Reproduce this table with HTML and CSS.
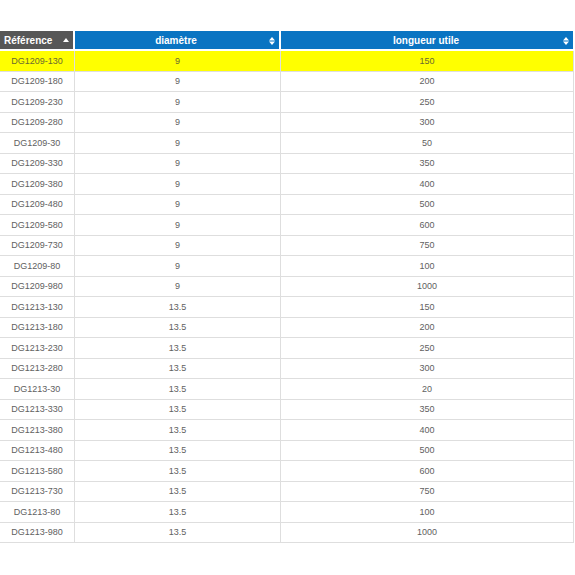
FILE: index.html
```html
<!DOCTYPE html>
<html lang="fr">
<head>
<meta charset="utf-8">
<title>Tableau</title>
<link rel="stylesheet" href="styles.css">
</head>
<body>
<table class="grid">
  <colgroup>
    <col class="c-ref">
    <col class="c-dia">
    <col class="c-len">
  </colgroup>
  <thead>
    <tr>
      <th class="h-ref"><span class="h-label">Référence</span><svg class="sort-up" viewBox="0 0 6 4" width="6" height="4"><path d="M3 0 L6 4 L0 4 Z" fill="#fff"/></svg></th>
      <th class="h-sort"><span class="h-label">diamètre</span><svg class="sort-both" viewBox="0 0 6 8" width="6" height="8"><path d="M3 0 L6 3.4 L0 3.4 Z M3 8 L6 4.6 L0 4.6 Z" fill="#fff"/></svg></th>
      <th class="h-sort"><span class="h-label">longueur utile</span><svg class="sort-both" viewBox="0 0 6 8" width="6" height="8"><path d="M3 0 L6 3.4 L0 3.4 Z M3 8 L6 4.6 L0 4.6 Z" fill="#fff"/></svg></th>
    </tr>
  </thead>
  <tbody>
    <tr class="hl"><td>DG1209-130</td><td>9</td><td>150</td></tr>
    <tr><td>DG1209-180</td><td>9</td><td>200</td></tr>
    <tr><td>DG1209-230</td><td>9</td><td>250</td></tr>
    <tr><td>DG1209-280</td><td>9</td><td>300</td></tr>
    <tr><td>DG1209-30</td><td>9</td><td>50</td></tr>
    <tr><td>DG1209-330</td><td>9</td><td>350</td></tr>
    <tr><td>DG1209-380</td><td>9</td><td>400</td></tr>
    <tr><td>DG1209-480</td><td>9</td><td>500</td></tr>
    <tr><td>DG1209-580</td><td>9</td><td>600</td></tr>
    <tr><td>DG1209-730</td><td>9</td><td>750</td></tr>
    <tr><td>DG1209-80</td><td>9</td><td>100</td></tr>
    <tr><td>DG1209-980</td><td>9</td><td>1000</td></tr>
    <tr><td>DG1213-130</td><td>13.5</td><td>150</td></tr>
    <tr><td>DG1213-180</td><td>13.5</td><td>200</td></tr>
    <tr><td>DG1213-230</td><td>13.5</td><td>250</td></tr>
    <tr><td>DG1213-280</td><td>13.5</td><td>300</td></tr>
    <tr><td>DG1213-30</td><td>13.5</td><td>20</td></tr>
    <tr><td>DG1213-330</td><td>13.5</td><td>350</td></tr>
    <tr><td>DG1213-380</td><td>13.5</td><td>400</td></tr>
    <tr><td>DG1213-480</td><td>13.5</td><td>500</td></tr>
    <tr><td>DG1213-580</td><td>13.5</td><td>600</td></tr>
    <tr><td>DG1213-730</td><td>13.5</td><td>750</td></tr>
    <tr><td>DG1213-80</td><td>13.5</td><td>100</td></tr>
    <tr><td>DG1213-980</td><td>13.5</td><td>1000</td></tr>
  </tbody>
</table>
</body>
</html>
```
FILE: styles.css
```css
html, body {
  margin: 0;
  padding: 0;
  background: #fff;
}
body {
  padding-top: 31px;
  font-family: "Liberation Sans", Arial, sans-serif;
}
.grid {
  width: 574px;
  border-collapse: separate;
  border-spacing: 0;
  table-layout: fixed;
}
.c-ref { width: 75px; }
.c-dia { width: 206px; }
.c-len { width: 293px; }

.grid th {
  height: 20px;
  box-sizing: border-box;
  padding: 0 6px 0 4px;
  border-right: 2px solid #fff;
  border-bottom: 2px solid #fff;
  color: #fff;
  font-size: 10px;
  font-weight: bold;
  background: #0a74c2;
  position: relative;
  text-align: center;
}
.grid th:last-child {
  border-right: 1px solid #fff;
}
.grid th.h-ref {
  background: #575757;
  text-align: left;
  padding-left: 4px;
}
.sort-up {
  position: absolute;
  right: 4px;
  top: 7px;
}
.sort-both {
  position: absolute;
  right: 4px;
  top: 6px;
}
.grid td {
  height: 20.5px;
  box-sizing: border-box;
  padding: 0;
  text-align: center;
  font-size: 9px;
  color: #616161;
  border-right: 1px solid #dedede;
  border-bottom: 1px solid #dedede;
}
.grid tr.hl td {
  background: #ffff00;
  color: #6a6a30;
}
```
